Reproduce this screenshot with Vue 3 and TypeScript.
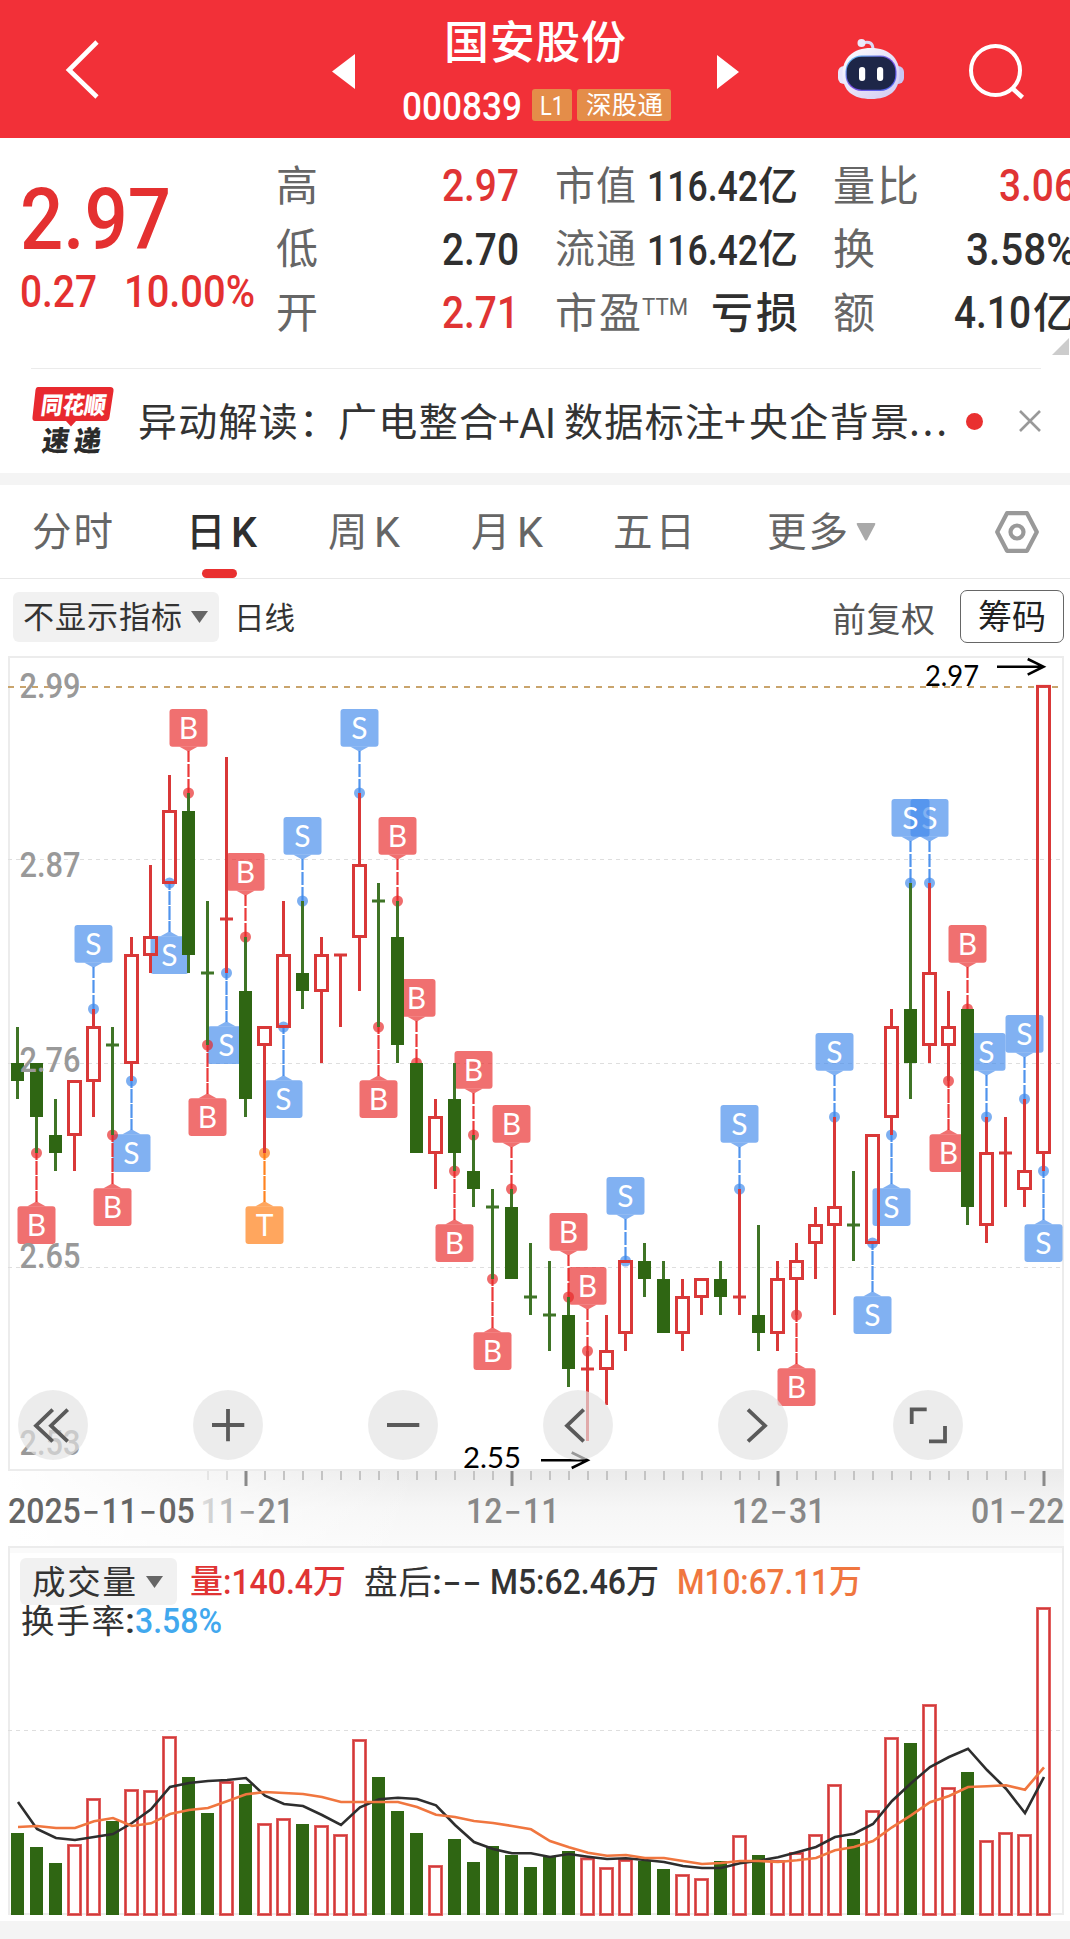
<script setup lang="ts">
import { defineComponent, h } from 'vue'

const CJK = '"Noto Sans CJK SC", sans-serif'
const NUM = 'Roboto, "Noto Sans CJK SC", sans-serif'

/* One run of text set to an exact advance width: digits are condensed, hanzi are only spaced. */
const Fit = defineComponent({
  props: {
    t: { type: String, required: true },
    w: { type: Number, required: true },
    s: { type: Number, required: true },
    wt: { type: Number, default: 400 },
    num: { type: Boolean, default: false },
    font: { type: String, default: '' },
  },
  setup(p) {
    return () => {
      const height = p.num ? p.s * 0.711 : p.s
      const base = p.num ? height : p.s * 0.86
      return h('svg', { width: p.w, height, style: { display: 'block', overflow: 'visible', flex: 'none' } }, [
        h('text', {
          x: 0, y: base, fill: 'currentColor',
          'font-size': p.s, 'font-weight': p.wt,
          'font-family': p.font || (p.num ? NUM : CJK),
          textLength: p.w,
          lengthAdjust: p.num ? 'spacingAndGlyphs' : 'spacing',
        }, p.t),
      ])
    }
  },
})

type Mark = '' | 'B^' | 'Bv' | 'S^' | 'Sv' | 'Tv'
type Row = [string, number, number, number, number, Mark?]

/* direction, high, body top, body bottom, low (in cents), trade mark */
const rows: Row[] = [
  ['g', 278, 276, 275, 274], ['g', 276, 276, 273, 271, 'Bv'], ['g', 274, 272, 271, 270],
  ['r', 275, 275, 272, 270], ['r', 279, 278, 275, 273, 'S^'], ['g', 278, 277, 277, 272, 'Bv'],
  ['r', 283, 282, 276, 275, 'Sv'], ['r', 287, 283, 282, 281], ['r', 292, 290, 286, 286, 'Sv'],
  ['g', 291, 290, 282, 281, 'B^'], ['g', 285, 281, 281, 277, 'Bv'], ['r', 293, 284, 284, 281, 'Sv'],
  ['g', 283, 280, 274, 273, 'B^'], ['r', 278, 278, 277, 271, 'Tv'], ['r', 285, 282, 278, 278, 'Sv'],
  ['g', 285, 281, 280, 279, 'S^'], ['r', 283, 282, 280, 276], ['r', 282, 282, 282, 278],
  ['r', 291, 287, 283, 280, 'S^'], ['g', 286, 285, 285, 278, 'Bv'], ['g', 285, 283, 277, 276, 'B^'],
  ['g', 276, 276, 271, 271, 'B^'], ['r', 274, 273, 271, 269], ['g', 276, 274, 271, 270, 'Bv'],
  ['g', 272, 270, 269, 268, 'B^'], ['g', 269, 268, 268, 264, 'Bv'], ['g', 269, 268, 264, 264, 'B^'],
  ['g', 266, 263, 263, 262], ['g', 265, 262, 262, 260], ['g', 263, 262, 259, 258, 'B^'],
  ['r', 260, 259, 259, 255, 'B^'], ['r', 262, 260, 259, 257], ['r', 265, 265, 261, 260, 'S^'],
  ['g', 266, 265, 264, 263], ['g', 265, 264, 261, 261], ['r', 264, 263, 261, 260],
  ['r', 264, 264, 263, 262], ['g', 265, 264, 263, 262], ['r', 269, 263, 263, 262, 'S^'],
  ['g', 267, 262, 261, 260], ['r', 265, 264, 261, 260], ['r', 266, 265, 264, 262, 'Bv'],
  ['r', 268, 267, 266, 264], ['r', 273, 268, 267, 262, 'S^'], ['g', 270, 267, 267, 265],
  ['r', 272, 272, 266, 266, 'Sv'], ['r', 279, 278, 273, 272, 'Sv'], ['g', 286, 279, 276, 274, 'S^'],
  ['r', 286, 281, 277, 276, 'S^'], ['r', 280, 278, 277, 275, 'Bv'], ['g', 279, 279, 268, 267, 'B^'],
  ['r', 273, 271, 267, 266, 'S^'], ['r', 273, 271, 271, 268], ['r', 274, 270, 269, 268, 'S^'],
  ['r', 296.95, 296.95, 271, 270, 'Sv'],
]

const xAt = (i: number) => 17.5 + 19 * i
const yAt = (c: number) => 685 + (297 - c) * 18

const candles = rows.map((r, i) => ({
  x: xAt(i), green: r[0] === 'g', hi: yAt(r[1]), top: yAt(r[2]), bot: yAt(r[3]), lo: yAt(r[4]), flat: r[2] === r[3],
}))

const tint: Record<string, string> = { B: 'rgb(232,38,38)', S: 'rgb(63,137,235)', T: 'rgb(255,120,11)' }
const marks = rows
  .map((r, i) => ({ m: r[5] || '', x: xAt(i), hi: yAt(r[1]), lo: yAt(r[4]) }))
  .filter((d) => d.m)
  .map((d) => {
    const up = d.m[1] === '^'
    const y = up ? d.hi : d.lo
    return {
      x: d.x, y, up, letter: d.m[0], color: tint[d.m[0]],
      end: up ? y - 42 : y + 49,
      box: up ? y - 84 : y + 53.3,
      tip: up
        ? `M${d.x - 9} ${y - 46.3}h18l-9 5z`
        : `M${d.x - 9} ${y + 53.3}h18l-9 -5z`,
    }
  })
  .reverse()

const vol = [246,204,156,213,351,282,378,375,537,414,306,402,393,276,291,273,270,243,528,414,312,246,150,228,159,207,180,144,174,192,173,144,168,162,138,123,111,162,240,180,165,189,243,393,228,315,534,516,633,384,429,225,249,243,924]
const m5 = [339,258,231,225,234,243,276,317,384,396,402,405,411,358,333,327,300,270,323,347,352,348,329,270,219,198,185,185,174,183,175,168,170,165,159,147,141,141,155,163,173,188,204,234,244,273,342,395,444,474,499,435,379,306,414]
const m10 = [264,267,261,261,281,291,267,275,303,315,321,341,362,369,366,363,354,339,339,339,339,324,301,294,282,276,267,257,222,203,187,178,180,171,171,162,153,156,162,162,159,164,171,194,204,222,263,299,338,357,384,386,389,376,443]
const volY = (v: number) => 1915 - v / 3
const line = (a: number[]) => a.map((v, i) => `${xAt(i) + 0.5},${volY(v).toFixed(1)}`).join(' ')
const bars = vol.map((v, i) => ({ x: xAt(i), y: volY(v), green: rows[i][0] === 'g' }))

const ticks = Array.from({ length: 45 }, (_, k) => k + 10).map((i) => ({
  x: xAt(i) + 0.5, major: i % 14 === 12, o: i === 10 ? 0.35 : i === 11 ? 0.6 : 1,
}))

const axis = [
  { t: '2.99', y: 698 }, { t: '2.87', y: 877 }, { t: '2.76', y: 1072 }, { t: '2.65', y: 1268 }, { t: '2.53', y: 1455 },
]
const dates = [
  { p: ['2025', '11', '05'], x: 8, c: '#666' },
  { p: ['11', '21'], x: 200.5, c: 'url(#fadeText)' },
  { p: ['12', '11'], x: 466, c: '#888' },
  { p: ['12', '31'], x: 732, c: '#888' },
  { p: ['01', '22'], x: 971, c: '#888' },
].map((d) => {
  let x = d.x
  const digits: { t: string; x: number; w: number }[] = []
  const dashes: number[] = []
  d.p.forEach((t, n) => {
    if (n) { dashes.push(x + 1); x += 20.6 }
    digits.push({ t, x, w: t.length * 18.2 })
    x += t.length * 18.2
  })
  return { digits, dashes, c: d.c }
})

const tools = [
  'M34.7 19.7L18 35.7L34.7 51.3M49.7 19.7L33 35.7L49.7 51.3',
  'M19 35H51.3M35 19V51.3',
  'M19 35H51.3',
  'M40.7 19.7L24 35.7L40.7 51.3',
  'M30 19.7L47 35.7L30 51.3',
  'M18.7 34V19.3H33.7M52 36V51.3H36',
]
</script>

<template>
  <div class="page">
    <header class="head">
      <svg class="back" width="36" height="64" viewBox="0 0 36 64"><path d="M32 4L4 32L32 59" fill="none" stroke="#fff" stroke-width="4.6" /></svg>
      <svg class="prev" width="23" height="35" viewBox="0 0 23 35"><path d="M23 0V35L0 17.5z" fill="#fff" /></svg>
      <div class="title">
        <Fit class="name" t="国安股份" :w="182" :s="45" :wt="500" />
        <div class="code">
          <Fit class="cnum" t="000839" :w="120" :s="38.5" :wt="500" num />
          <span class="tag l1"><Fit t="L1" :w="24" :s="26" num /></span>
          <span class="tag sgt"><Fit t="深股通" :w="77" :s="25.5" /></span>
        </div>
      </div>
      <svg class="next" width="22" height="34" viewBox="0 0 22 34"><path d="M0 0V34L22 17z" fill="#fff" /></svg>
      <svg class="bot" width="68" height="62" viewBox="0 0 68 62">
        <defs>
          <linearGradient id="shell" x1="0" y1="0" x2="1" y2="1"><stop offset="0" stop-color="#fff" /><stop offset="1" stop-color="#cfc8f2" /></linearGradient>
          <linearGradient id="ring" x1="0" y1="0" x2="1" y2="1"><stop offset="0" stop-color="#5fd0f5" /><stop offset=".5" stop-color="#7a4be0" /><stop offset="1" stop-color="#4a6bf0" /></linearGradient>
        </defs>
        <path d="M25 5C33 3 36 5 36 12" fill="none" stroke="#dcd9f6" stroke-width="3" />
        <circle cx="24.5" cy="5" r="4" fill="#ece9fb" />
        <rect x="1" y="28" width="12" height="18" rx="6" fill="#e9e6fb" />
        <rect x="55" y="28" width="12" height="18" rx="6" fill="#c9c6f2" />
        <path d="M34 10C52 10 62.500 20 62.500 36C62.500 53 52 61 34 61C16 61 5.500 53 5.500 36C5.500 20 16 10 34 10z" fill="url(#shell)" />
        <rect x="8.500" y="17.500" width="51" height="35.500" rx="16" fill="url(#ring)" />
        <rect x="9.700" y="18.700" width="48.600" height="33" rx="15" fill="#1d2648" />
        <rect x="22" y="29" width="6.200" height="14" rx="3" fill="#fff" />
        <rect x="40" y="29" width="6.200" height="14" rx="3" fill="#fff" />
      </svg>
      <svg class="search" width="58" height="58" viewBox="0 0 58 58"><circle cx="27.5" cy="27.5" r="24.5" fill="none" stroke="#fff" stroke-width="4" /><path d="M43.5 44.5L54.5 54.5" stroke="#fff" stroke-width="4.600" /></svg>
    </header>

    <section class="quote">
      <div class="price">
        <Fit class="big" t="2.97" :w="151" :s="86" :wt="500" num />
        <div class="chg"><Fit t="0.27" :w="77" :s="43.5" :wt="500" num /><Fit t="10.00%" :w="131" :s="43.5" :wt="500" num /></div>
      </div>
      <div class="stats a">
        <div><Fit t="高" :w="42" :s="42" /><Fit class="red" t="2.97" :w="77" :s="43.5" :wt="500" num /></div>
        <div><Fit t="低" :w="42" :s="42" /><Fit class="dark" t="2.70" :w="77" :s="43.5" :wt="500" num /></div>
        <div><Fit t="开" :w="42" :s="42" /><Fit class="red" t="2.71" :w="77" :s="43.5" :wt="500" num /></div>
      </div>
      <div class="stats b">
        <div><Fit t="市值" :w="81" :s="40" /><span class="v dark"><Fit t="116.42" :w="111" :s="43" :wt="500" num /><Fit t="亿" :w="40" :s="40" :wt="500" /></span></div>
        <div><Fit t="流通" :w="81" :s="40" /><span class="v dark"><Fit t="116.42" :w="111" :s="43" :wt="500" num /><Fit t="亿" :w="40" :s="40" :wt="500" /></span></div>
        <div><span class="v"><Fit t="市盈" :w="86" :s="42" /><Fit class="ttm" t="TTM" :w="46" :s="23" num /></span><Fit class="dark" t="亏损" :w="87" :s="42" :wt="500" /></div>
      </div>
      <div class="stats c">
        <div><Fit t="量比" :w="86" :s="42" /><Fit class="red" t="3.06" :w="77" :s="43.5" :wt="500" num /></div>
        <div><Fit t="换" :w="42" :s="42" /><Fit class="dark" t="3.58%" :w="110" :s="43.5" :wt="500" num /></div>
        <div><Fit t="额" :w="42" :s="42" /><span class="v dark yi"><Fit t="4.10" :w="77" :s="43.5" :wt="500" num /><Fit t="亿" :w="42" :s="42" :wt="500" /></span></div>
      </div>
      <svg class="corner" width="17" height="17"><path d="M17 0V17H0z" fill="#ccc" /></svg>
    </section>

    <section class="news">
      <svg class="logo" width="84" height="68" viewBox="0 0 84 68">
        <path d="M7 0H79Q83 0 82.500 4L78.500 30Q78 34 74 34H45L40 39.500L35 34H4Q1 34 1.500 30L4.500 3Q5 0 7 0z" fill="#e8292f" />
        <text transform="translate(9 27) skewX(-8)" font-size="24" font-weight="900" fill="#fff" textLength="65" lengthAdjust="spacingAndGlyphs">同花顺</text>
        <g font-size="28" font-weight="900" fill="#2b2b2b">
          <text transform="translate(10 63.500) skewX(-8)" textLength="27" lengthAdjust="spacingAndGlyphs">速</text>
          <text transform="translate(42 63.500) skewX(-8)" textLength="27" lengthAdjust="spacingAndGlyphs">递</text>
        </g>
      </svg>
      <div class="line">
        <Fit t="异动解读：" :w="200" :s="39" /><Fit t="广电整合" :w="160" :s="39" /><Fit t="+" :w="21" :s="39" /><Fit class="ai" t="AI" :w="37" :s="43" num /><Fit t="数据标注" :w="160" :s="39" /><Fit t="+" :w="25" :s="39" /><Fit t="央企背景" :w="160" :s="39" /><Fit t="..." :w="38" :s="39" />
      </div>
      <i class="dot"></i>
      <svg class="close" width="22" height="22"><path d="M1 1L21 21M21 1L1 21" stroke="#999" stroke-width="2.600" /></svg>
    </section>

    <nav class="tabs">
      <Fit class="t1" t="分时" :w="81" :s="39.5" />
      <span class="t2 on"><Fit t="日" :w="45" :s="39.5" :wt="500" /><Fit t="K" :w="26" :s="43" :wt="500" num /></span>
      <span class="t3"><Fit t="周" :w="46" :s="39.5" /><Fit t="K" :w="26" :s="43" num /></span>
      <span class="t4"><Fit t="月" :w="46" :s="39.5" /><Fit t="K" :w="26" :s="43" num /></span>
      <Fit class="t5" t="五日" :w="82" :s="39.5" />
      <span class="t6"><Fit t="更多" :w="81" :s="39.5" /><svg class="more" width="20" height="18"><path d="M1.500 0H18.500Q20 0 19 2L11 17Q10 18 9 17L1 2Q0 0 1.500 0z" fill="#a9a9a9" /></svg></span>
      <svg class="gear" width="44" height="42" viewBox="0 0 44 42"><path d="M12 2.200H32L41.800 21L32 39.800H12L2.200 21z" fill="none" stroke="#999" stroke-width="4.200" stroke-linejoin="round" /><circle cx="22" cy="21" r="6.500" fill="none" stroke="#999" stroke-width="4.200" /></svg>
    </nav>

    <div class="bar">
      <span class="pill"><Fit t="不显示指标" :w="159" :s="31" /><svg width="17" height="12"><path d="M0 0H17L8.500 12z" fill="#666" /></svg></span>
      <Fit class="daily" t="日线" :w="61" :s="30.5" />
      <Fit class="fq" t="前复权" :w="103" :s="34" />
      <span class="chip"><Fit t="筹码" :w="68" :s="34" /></span>
    </div>

    <section class="kline">
      <svg width="1070" height="890" viewBox="0 656 1070 890">
        <defs>
          <linearGradient id="axV" x1="0" y1="0" x2="0" y2="1"><stop offset="0" stop-color="#ebebeb" /><stop offset=".5" stop-color="#f6f6f6" /><stop offset="1" stop-color="#fafafa" /></linearGradient>
          <linearGradient id="axH" gradientUnits="userSpaceOnUse" x1="8" y1="0" x2="420" y2="0"><stop offset="0" stop-color="#fff" /><stop offset=".45" stop-color="#fff" stop-opacity=".6" /><stop offset="1" stop-color="#fff" stop-opacity="0" /></linearGradient>
          <linearGradient id="fadeText" gradientUnits="userSpaceOnUse" x1="198" y1="0" x2="262" y2="0"><stop offset="0" stop-color="#e6e6e6" /><stop offset="1" stop-color="#888" /></linearGradient>
        </defs>
        <rect x="8" y="1471" width="1056" height="75" fill="url(#axV)" />
        <rect x="8" y="1471" width="1056" height="75" fill="url(#axH)" />
        <rect x="9" y="657" width="1054" height="813" fill="none" stroke="#ececec" stroke-width="2" />
        <g stroke="#dedede" stroke-dasharray="4 4"><path d="M8 859.500H1060M8 1063.500H1060M8 1267.500H1060" /></g>
        <path d="M8 687H1060" stroke="#c9a46c" stroke-width="2" stroke-dasharray="6 6" />

        <g v-for="m in marks" :key="m.x">
          <path :d="`M${m.x} ${m.y}V${m.end}`" :stroke="m.color" stroke-width="3" stroke-opacity=".55" :stroke-dasharray="m.up ? '14 2 13 2 20' : '7 1 14 1 14 1 20'" />
          <path :d="`M${m.x} ${m.y}V${m.end}`" :stroke="m.color" stroke-width="1" stroke-opacity=".8" :stroke-dasharray="m.up ? '14 2 13 2 20' : '7 1 14 1 14 1 20'" />
          <circle :cx="m.x" :cy="m.y" r="5.500" :fill="m.color" fill-opacity=".68" />
          <path :d="m.tip" :fill="m.color" fill-opacity=".66" />
          <rect :x="m.x - 19" :y="m.box" width="38" height="37.700" rx="3" :fill="m.color" fill-opacity=".66" />
          <text class="mk" :x="m.x" :y="m.box + 30" text-anchor="middle">{{ m.letter }}</text>
        </g>

        <g v-for="c in candles" :key="c.x">
          <template v-if="c.green">
            <path :d="`M${c.x} ${c.hi}V${c.lo}`" stroke="#3f7426" stroke-width="3" />
            <rect v-if="c.flat" :x="c.x - 6.500" :y="c.top - 1.500" width="13" height="3" fill="#3f7426" />
            <rect v-else :x="c.x - 6.500" :y="c.top" width="13" :height="c.bot - c.top" fill="#2f6613" />
          </template>
          <template v-else>
            <path v-if="c.hi < c.top || c.flat" :d="`M${c.x} ${c.hi}V${c.top}`" stroke="#d93838" stroke-width="3" />
            <path v-if="c.lo > c.bot" :d="`M${c.x} ${c.bot}V${c.lo}`" stroke="#d93838" stroke-width="3" />
            <rect v-if="c.flat" :x="c.x - 6.500" :y="c.top - 1.500" width="13" height="3" fill="#d93838" />
            <rect v-else :x="c.x - 6" :y="c.top + 0.500" width="12" :height="c.bot - c.top - 1" fill="none" stroke="#d93838" stroke-width="3" />
          </template>
        </g>

        <g class="num" font-size="35" font-weight="500" fill="#999">
          <text v-for="a in axis" :key="a.t" x="19.500" :y="a.y" textLength="61" lengthAdjust="spacingAndGlyphs">{{ a.t }}</text>
        </g>
        <g class="thin" font-size="29.500" fill="#000">
          <text x="925" y="686" textLength="54" lengthAdjust="spacingAndGlyphs">2.97</text>
          <text x="463" y="1468" textLength="58" lengthAdjust="spacingAndGlyphs">2.55</text>
        </g>
        <g fill="none" stroke="#000" stroke-width="2.600">
          <path d="M997 666.700H1043M1027.700 659L1043.500 666.700L1027.700 674.700" />
          <path d="M541 1460.300H587M571.700 1452.500L587.500 1460.300L571.700 1468" />
        </g>

        <rect v-for="k in ticks" :key="k.x" :x="k.x - (k.major ? 1.500 : 1)" y="1471" :width="k.major ? 3 : 2" :height="k.major ? 15 : 9" :fill="k.major ? '#8a8a8a' : '#c4c4c4'" :opacity="k.o" />
        <g v-for="(d, n) in dates" :key="n" :fill="d.c" font-size="35">
          <text v-for="g in d.digits" :key="g.x" class="num" :x="g.x" y="1523" :textLength="g.w" lengthAdjust="spacingAndGlyphs">{{ g.t }}</text>
          <text v-for="x in d.dashes" :key="x" class="dash" :x="x" y="1523" textLength="18.500" lengthAdjust="spacingAndGlyphs">-</text>
        </g>
      </svg>
      <div class="tools">
        <button v-for="p in tools" :key="p"><svg width="70" height="70"><path :d="p" fill="none" stroke="#5a5a5a" stroke-width="3.800" /></svg></button>
      </div>
    </section>

    <section class="volume">
      <svg width="1070" height="375" viewBox="0 1546 1070 375">
        <rect x="10" y="1548" width="1052" height="5" fill="#fafafa" />
        <rect x="9" y="1547" width="1054" height="367" fill="none" stroke="#ececec" stroke-width="2" />
        <path d="M8 1730.500H1062" stroke="#dedede" stroke-dasharray="4 4" />
        <g v-for="b in bars" :key="b.x">
          <rect v-if="b.green" :x="b.x - 6.500" :y="b.y" width="13" :height="1915 - b.y" fill="#2f6613" />
          <g v-else fill="none">
            <rect :x="b.x - 6" :y="b.y + 1.500" width="12" :height="1913 - b.y" stroke="#e46464" stroke-width="3" />
            <rect :x="b.x - 6" :y="b.y + 1.500" width="12" :height="1913 - b.y" stroke="#cf3a3a" stroke-width="1.200" />
          </g>
        </g>
        <polyline :points="line(m5)" fill="none" stroke="#2e2e2e" stroke-width="2.600" />
        <polyline :points="line(m10)" fill="none" stroke="#f0763f" stroke-width="2.600" />
      </svg>
      <div class="legend">
        <div class="l-row">
          <span class="pill vp"><Fit t="成交量" :w="104" :s="33.5" /><svg width="17" height="12"><path d="M0 0H17L8.500 12z" fill="#666" /></svg></span>
          <span class="v g1"><Fit t="量" :w="33" :s="33" :wt="500" /><Fit t=":140.4" :w="90" :s="35.5" :wt="500" num /><Fit t="万" :w="33" :s="33" :wt="500" /></span>
          <span class="v g2"><Fit t="盘后" :w="68" :s="33.5" /><Fit t=":" :w="10" :s="35.5" :wt="500" num /><Fit class="dd" t="--" :w="40" :s="36" num font="Inter, sans-serif" /></span>
          <span class="v g3"><Fit t="M5:62.46" :w="136" :s="35.5" :wt="500" num /><Fit t="万" :w="33" :s="33" :wt="500" /></span>
          <span class="v g4"><Fit t="M10:67.11" :w="152" :s="35.5" :wt="500" num /><Fit t="万" :w="33" :s="33" :wt="500" /></span>
        </div>
        <div class="l-row two"><Fit t="换手率" :w="104" :s="33.5" /><Fit t=":" :w="10" :s="35.5" :wt="500" num /><Fit class="blue" t="3.58%" :w="87" :s="35.5" :wt="500" num /></div>
      </div>
    </section>
    <div class="foot"></div>
  </div>
</template>

<style>
body { margin: 0; background: #fff; }
</style>

<style scoped>
.page { width: 1070px; height: 1939px; overflow: hidden; background: #fff; font-family: "Noto Sans CJK SC", sans-serif; color: #333; display: flex; flex-direction: column; }
.page > * { flex: none; box-sizing: border-box; }
.v { display: flex; align-items: center; }
.red { color: #e03434; }
.dark { color: #2f2f2f; }

.head { height: 138px; background: #f23038; color: #fff; display: flex; align-items: flex-start; }
.back { margin: 38px 0 0 65px; }
.prev { margin: 54px 0 0 231px; }
.title { margin-left: 47px; width: 272px; }
.name { margin: 20px 0 0 42px; }
.code { display: flex; height: 32px; margin-top: 24px; align-items: center; }
.cnum { margin-top: 3px; }
.tag { display: flex; align-items: center; justify-content: center; height: 32px; background: #e48d49; border-radius: 3px; flex: none; }
.l1 { width: 40px; margin-left: 10px; }
.sgt { width: 94px; margin-left: 5px; }
.next { margin: 55px 0 0 43px; }
.bot { margin: 38px 0 0 98px; flex: none; }
.search { margin: 43px 0 0 63px; flex: none; }

.quote { height: 230px; display: flex; position: relative; overflow: hidden; }
.price { width: 276px; padding: 50px 0 0 20px; box-sizing: border-box; color: #e43030; flex: none; }
.chg { display: flex; margin-top: 27px; gap: 27px; }
.stats { padding-top: 16px; color: #666; flex: none; }
.stats > div { height: 63.500px; display: flex; align-items: center; justify-content: space-between; }
.a { width: 243px; }
.b { width: 243px; margin-left: 36px; }
.c { width: 243px; margin-left: 35px; }
.yi { gap: 2px; margin-right: 1px; }
.ttm { margin: -12px 0 0 1px; }
.corner { position: absolute; right: 1px; bottom: 13px; }

.news { height: 105px; margin: 0 29px 0 31px; border-top: 1px solid #ebebeb; display: flex; align-items: center; }
.logo { flex: none; font-family: "Noto Sans CJK SC", sans-serif; }
.line { display: flex; align-items: center; margin-left: 23px; width: 812px; flex: none; }
.ai { margin: 2px 8px 0 0; }
.dot { width: 17px; height: 17px; border-radius: 50%; background: #e93030; margin-left: 16px; flex: none; }
.close { margin-left: 36px; flex: none; }

.tabs { height: 106px; border-top: 12px solid #f4f4f4; border-bottom: 1px solid #e8e8e8; color: #666; display: flex; align-items: center; }
.tabs > * { display: flex; align-items: center; }
.t1 { margin-left: 32px; }
.t2 { width: 71px; margin-left: 73px; position: relative; color: #2f2f2f; }
.t2::after { content: ""; position: absolute; left: 16px; top: 57px; width: 35px; height: 9px; border-radius: 5px; background: #e93030; }
.t3 { margin-left: 71px; }
.t4 { margin-left: 71px; }
.t5 { margin-left: 70px; }
.t6 { margin-left: 72px; }
.more { margin-left: 8px; }
.gear { margin-left: 119px; flex: none; }

.bar { height: 77px; display: flex; align-items: center; padding-bottom: 2px; }
.pill { display: flex; align-items: center; background: #f1f1f1; border-radius: 6px; box-sizing: border-box; flex: none; }
.bar .pill { width: 206px; height: 50px; margin-left: 13px; padding-left: 10px; gap: 9px; }
.daily { margin: 4px 0 0 15px; }
.fq { margin: 6px 0 0 537px; color: #555; }
.chip { width: 104px; height: 53px; margin-left: 25px; border: 1.500px solid #666; border-radius: 7px; display: flex; align-items: center; justify-content: center; box-sizing: border-box; color: #222; }

.kline { height: 890px; position: relative; }
.kline > svg, .volume > svg { display: block; }
.num { font-family: Roboto, sans-serif; font-weight: 500; }
.thin { font-family: Lato, sans-serif; }
.dash { font-family: Inter, sans-serif; }
.mk { font-family: Lato, sans-serif; font-size: 30px; fill: #fff; }
.tools { position: absolute; left: 18px; top: 734px; display: flex; gap: 105px; }
.tools button { width: 70px; height: 70px; border: 0; padding: 0; border-radius: 50%; background: rgba(227, 227, 227, .67); }
.tools svg { display: block; }

.volume { height: 375px; position: relative; }
.legend { position: absolute; left: 20px; top: 12px; }
.l-row { display: flex; align-items: center; height: 47px; }
.vp { width: 157px; height: 47px; padding-left: 12px; gap: 10px; }
.g1 { margin-left: 13px; color: #e03434; }
.g2 { margin-left: 18px; }
.g3 { margin-left: 8px; }
.g4 { margin-left: 18px; color: #f0763f; }
.two { height: 34px; margin-top: -1px; padding-left: 1px; }
.blue { color: #41a8ee; }
.foot { height: 18px; background: #f4f4f4; }
</style>
